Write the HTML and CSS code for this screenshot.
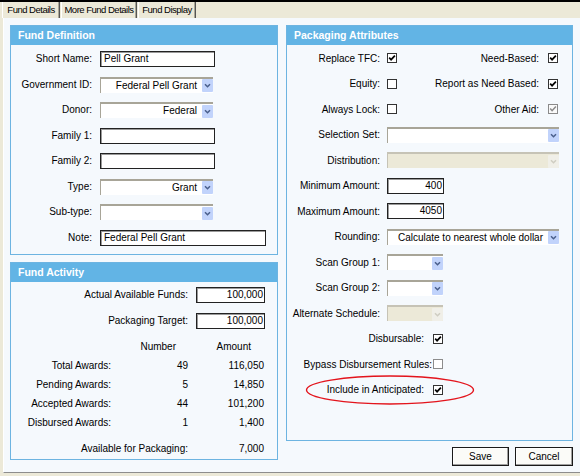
FILE: index.html
```html
<!DOCTYPE html>
<html>
<head>
<meta charset="utf-8">
<link rel="stylesheet" href="styles.css">
</head>
<body>
<div class="window">
  <div class="tabs">
    <div class="tab t1">Fund Details</div>
    <div class="tab t2">More Fund Details</div>
    <div class="tab t3">Fund Display</div>
  </div>
  <div class="panel">
    <div class="col-left">
      <section class="box def">
        <h2>Fund Definition</h2>
        <div class="def-form">
          <span class="lbl">Short Name:</span><div class="tb w115">Pell Grant</div>
          <span class="lbl">Government ID:</span><div class="dd w113"><span class="v">Federal Pell Grant</span><span class="arr"><svg width="11" height="13" viewBox="0 0 11 13"><path d="M3 5.2 L5.5 7.7 L8 5.2" fill="none" stroke="#4a5f8c" stroke-width="1.5"/></svg></span></div>
          <span class="lbl">Donor:</span><div class="dd w113"><span class="v">Federal</span><span class="arr"><svg width="11" height="13" viewBox="0 0 11 13"><path d="M3 5.2 L5.5 7.7 L8 5.2" fill="none" stroke="#4a5f8c" stroke-width="1.5"/></svg></span></div>
          <span class="lbl">Family 1:</span><div class="tb w115"></div>
          <span class="lbl">Family 2:</span><div class="tb w115"></div>
          <span class="lbl">Type:</span><div class="dd w113"><span class="v">Grant</span><span class="arr"><svg width="11" height="13" viewBox="0 0 11 13"><path d="M3 5.2 L5.5 7.7 L8 5.2" fill="none" stroke="#4a5f8c" stroke-width="1.5"/></svg></span></div>
          <span class="lbl">Sub-type:</span><div class="dd w113"><span class="v"></span><span class="arr"><svg width="11" height="13" viewBox="0 0 11 13"><path d="M3 5.2 L5.5 7.7 L8 5.2" fill="none" stroke="#4a5f8c" stroke-width="1.5"/></svg></span></div>
          <span class="lbl">Note:</span><div class="tb w166">Federal Pell Grant</div>
        </div>
      </section>
      <section class="box act">
        <h2>Fund Activity</h2>
        <div class="act-form">
          <span class="lbl">Actual Available Funds:</span><div class="tb num w69">100,000</div>
          <span class="lbl">Packaging Target:</span><div class="tb num w69">100,000</div>
        </div>
        <div class="stats">
          <span></span><span class="h-num">Number</span><span class="h-amt">Amount</span>
          <span>Total Awards:</span><span>49</span><span>116,050</span>
          <span>Pending Awards:</span><span>5</span><span>14,850</span>
          <span>Accepted Awards:</span><span>44</span><span>101,200</span>
          <span>Disbursed Awards:</span><span>1</span><span>1,400</span>
        </div>
        <div class="stats avail">
          <span class="span2">Available for Packaging:</span><span>7,000</span>
        </div>
      </section>
    </div>
    <div class="col-right">
      <section class="box pack">
        <h2>Packaging Attributes</h2>
        <div class="pform">
          <div class="prow"><span class="pl">Replace TFC:</span><span class="cb"><svg width="8" height="8" viewBox="0 0 8 8"><path d="M1.2 3.6 L3.1 5.7 L6.9 1.6" fill="none" stroke="#000" stroke-width="1.7"/></svg></span><span class="pl2">Need-Based:</span><span class="cb"><svg width="8" height="8" viewBox="0 0 8 8"><path d="M1.2 3.6 L3.1 5.7 L6.9 1.6" fill="none" stroke="#000" stroke-width="1.7"/></svg></span></div>
          <div class="prow"><span class="pl">Equity:</span><span class="cb"></span><span class="pl2">Report as Need Based:</span><span class="cb"><svg width="8" height="8" viewBox="0 0 8 8"><path d="M1.2 3.6 L3.1 5.7 L6.9 1.6" fill="none" stroke="#000" stroke-width="1.7"/></svg></span></div>
          <div class="prow"><span class="pl">Always Lock:</span><span class="cb"></span><span class="pl2">Other Aid:</span><span class="cb dis"><svg width="8" height="8" viewBox="0 0 8 8"><path d="M1.2 3.6 L3.1 5.7 L6.9 1.6" fill="none" stroke="#8a8a8a" stroke-width="1.5"/></svg></span></div>
          <div class="prow"><span class="pl">Selection Set:</span><div class="dd w172"><span class="v"></span><span class="arr"><svg width="11" height="13" viewBox="0 0 11 13"><path d="M3 5.2 L5.5 7.7 L8 5.2" fill="none" stroke="#4a5f8c" stroke-width="1.5"/></svg></span></div></div>
          <div class="prow"><span class="pl">Distribution:</span><div class="dd dis w172"><span class="v"></span><span class="arr"><svg width="11" height="13" viewBox="0 0 11 13"><path d="M3 5.2 L5.5 7.7 L8 5.2" fill="none" stroke="#cfcdc2" stroke-width="1.5"/></svg></span></div></div>
          <div class="prow"><span class="pl">Minimum Amount:</span><div class="tb num w57">400</div></div>
          <div class="prow"><span class="pl">Maximum Amount:</span><div class="tb num w57">4050</div></div>
          <div class="prow"><span class="pl">Rounding:</span><div class="dd w172"><span class="v">Calculate to nearest whole dollar</span><span class="arr"><svg width="11" height="13" viewBox="0 0 11 13"><path d="M3 5.2 L5.5 7.7 L8 5.2" fill="none" stroke="#4a5f8c" stroke-width="1.5"/></svg></span></div></div>
          <div class="prow"><span class="pl">Scan Group 1:</span><div class="dd w56"><span class="v"></span><span class="arr"><svg width="11" height="13" viewBox="0 0 11 13"><path d="M3 5.2 L5.5 7.7 L8 5.2" fill="none" stroke="#4a5f8c" stroke-width="1.5"/></svg></span></div></div>
          <div class="prow"><span class="pl">Scan Group 2:</span><div class="dd w56"><span class="v"></span><span class="arr"><svg width="11" height="13" viewBox="0 0 11 13"><path d="M3 5.2 L5.5 7.7 L8 5.2" fill="none" stroke="#4a5f8c" stroke-width="1.5"/></svg></span></div></div>
          <div class="prow"><span class="pl">Alternate Schedule:</span><div class="dd dis w56"><span class="v"></span><span class="arr"><svg width="11" height="13" viewBox="0 0 11 13"><path d="M3 5.2 L5.5 7.7 L8 5.2" fill="none" stroke="#cfcdc2" stroke-width="1.5"/></svg></span></div></div>
          <div class="prow"><span class="pl wide">Disbursable:</span><span class="cb"><svg width="8" height="8" viewBox="0 0 8 8"><path d="M1.2 3.6 L3.1 5.7 L6.9 1.6" fill="none" stroke="#000" stroke-width="1.7"/></svg></span></div>
          <div class="prow"><span class="pl bypass">Bypass Disbursement Rules:</span><span class="cb light"></span></div>
          <div class="prow"><span class="pl wide">Include in Anticipated:</span><span class="cb"><svg width="8" height="8" viewBox="0 0 8 8"><path d="M1.2 3.6 L3.1 5.7 L6.9 1.6" fill="none" stroke="#000" stroke-width="1.7"/></svg></span></div>
        </div>
      </section>
      <div class="btns">
        <div class="btn save">Save</div>
        <div class="btn cancel">Cancel</div>
      </div>
    </div>
  </div>
</div>
<svg class="circle" width="180" height="36" viewBox="0 0 180 36"><ellipse cx="90" cy="18" rx="83.5" ry="14" fill="none" stroke="#e3141c" stroke-width="1.4"/></svg>
</body>
</html>
```

FILE: styles.css
```css
body {
  margin: 0;
  width: 580px;
  height: 476px;
  overflow: hidden;
  position: relative;
  background: #ece9d8;
  font-family: "Liberation Sans", Arial, sans-serif;
  font-size: 10px;
  color: #000;
}

.window {
  border-top: 2px solid #000;
}

.tabs {
  display: flex;
  height: 16px;
  padding-left: 2px;
}

.tab {
  box-sizing: border-box;
  height: 16px;
  line-height: 16px;
  text-align: center;
  font-size: 9.5px;
  letter-spacing: -0.5px;
  border-left: 1px solid #fff;
  border-right: 1px solid #555;
  box-shadow: inset -1px 0 0 #a9a797;
  margin-right: 1px;
  white-space: nowrap;
}
.t1 { width: 58px; }
.t2 { width: 76px; }
.t3 { width: 58px; }

.panel {
  box-sizing: border-box;
  height: 455px;
  margin-left: 3px;
  background: #f5f9fd;
  border-left: 1px solid #fff;
  border-bottom: 1px solid #8d8d8d;
  padding: 7px 0 0 6px;
  display: flex;
  gap: 8px;
}

.col-left {
  width: 268px;
  display: flex;
  flex-direction: column;
  gap: 7px;
}

.col-right {
  width: 287px;
  display: flex;
  flex-direction: column;
}

.box {
  box-sizing: border-box;
  border: 1px solid #6db4e1;
  background: #f5f9fd;
}

.box h2 {
  margin: 0;
  height: 19px;
  line-height: 19px;
  background: #62b4e5;
  color: #fff;
  font-size: 10.5px;
  font-weight: bold;
  padding-left: 7px;
}

.def { height: 230px; }
.act { height: 198px; }
.pack { height: 416px; }

.lbl {
  justify-self: end;
  line-height: 16px;
  white-space: nowrap;
}

.def-form {
  display: grid;
  grid-template-columns: 81px auto;
  column-gap: 8px;
  row-gap: 9.5px;
  grid-auto-rows: 16px;
  padding-top: 6px;
  justify-items: start;
  align-items: center;
}

.tb {
  box-sizing: border-box;
  height: 16px;
  background: #fff;
  border: 1px solid #222;
  box-shadow: inset 1px 1px 0 #9a9a9a;
  line-height: 14px;
  padding: 0 3px;
  white-space: nowrap;
  overflow: hidden;
}
.tb.num {
  text-align: right;
  padding-right: 1px;
}

.dd {
  box-sizing: border-box;
  height: 16px;
  background: #fff;
  border-top: 2px solid #a8a598;
  border-left: 1px solid #a8a598;
  display: flex;
  align-items: center;
  flex: none;
}
.dd .v {
  flex: 1;
  text-align: right;
  padding-right: 5px;
  line-height: 14px;
  white-space: nowrap;
  overflow: hidden;
}
.dd .arr {
  width: 11px;
  height: 13px;
  background: #c1d3fb;
  border-radius: 1px;
  display: flex;
  flex: none;
}
.dd.dis {
  background: #ece9d8;
  border-color: #c6c3b6;
}
.dd.dis .arr {
  background: #f0efe8;
}

.w115 { width: 115px; }
.w113 { width: 113px; }
.w166 { width: 166px; }
.w69 { width: 69px; }
.w57 { width: 57px; }
.w56 { width: 56px; }
.w172 { width: 172px; }

.act-form {
  display: grid;
  grid-template-columns: 177px 69px;
  column-gap: 8px;
  row-gap: 10px;
  grid-auto-rows: 16px;
  padding-top: 5px;
  align-items: center;
}

.stats {
  display: grid;
  grid-template-columns: 100px 77px 76px;
  grid-auto-rows: 19px;
  line-height: 19px;
  text-align: right;
  margin-top: 7.5px;
  white-space: nowrap;
}
.stats .h-num { padding-right: 12px; }
.stats .h-amt { padding-right: 13px; }
.stats.avail { margin-top: 7px; }
.stats .span2 { grid-column: 1 / 3; }

.pform {
  padding-top: 5px;
}

.prow {
  display: flex;
  align-items: center;
  height: 16px;
  margin-bottom: 9.5px;
  padding-right: 14px;
}

.pl {
  width: 93px;
  flex: none;
  text-align: right;
  margin-right: 7px;
  white-space: nowrap;
}
.pl2 {
  flex: 1;
  text-align: right;
  margin-right: 9px;
  white-space: nowrap;
}
.pl.wide {
  width: 137px;
  margin-right: 9px;
}
.pl.bypass {
  width: 145px;
  margin-right: 1px;
}

.cb {
  box-sizing: border-box;
  width: 10px;
  height: 10px;
  border: 1px solid #333;
  background: #fff;
  flex: none;
  display: flex;
}
.cb.dis {
  border-color: #8a8a8a;
  background: #fafafa;
}
.cb.light {
  border-color: #8c8c8c;
}

.btns {
  display: flex;
  justify-content: flex-end;
  gap: 6px;
  margin-top: 6px;
}

.btn {
  box-sizing: border-box;
  height: 19px;
  line-height: 17px;
  text-align: center;
  background: #fbfbf8;
  border: 1px solid #1a1a1a;
  box-shadow: inset -1px -1px 0 #a0a0a0, inset 1px 1px 0 #fff;
}
.save { width: 57px; }
.cancel { width: 58px; }

.circle {
  position: absolute;
  left: 300px;
  top: 372px;
}
```
